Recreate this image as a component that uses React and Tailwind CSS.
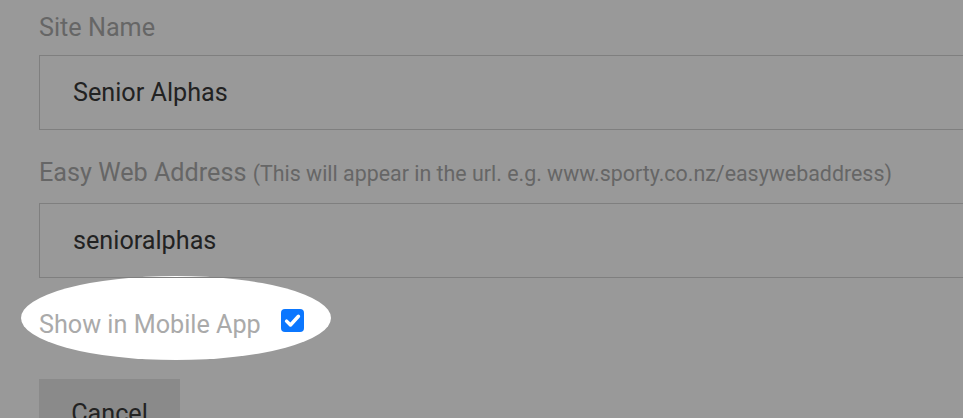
export default function App() {
  return (
    <div
      className="relative w-[963px] h-[418px] overflow-hidden bg-[#999999] pl-[39px]"
      style={{ fontFamily: "Roboto, 'Liberation Sans', sans-serif" }}
    >
      {/* spotlight behind the mobile app toggle */}
      <div className="absolute left-[21px] top-[276px] w-[310px] h-[84px] rounded-[50%] bg-white" />

      <div className="relative flex flex-col">
        <label className="pt-[12px] text-[25.2px] leading-[32px] text-[#666666]">Site Name</label>
        <div className="mt-[11px] h-[75px] w-[960px] border border-[#7f7f7f] flex items-center pl-[33px] text-[25.2px] text-[#222222]">
          Senior Alphas
        </div>

        <label className="mt-[27px] text-[25.2px] leading-[32px] text-[#666666]">
          Easy Web Address{" "}
          <span className="text-[21.4px]">(This will appear in the url. e.g. www.sporty.co.nz/easywebaddress)</span>
        </label>
        <div className="mt-[13px] h-[75px] w-[960px] border border-[#7f7f7f] flex items-center pl-[33px] text-[25.2px] text-[#222222]">
          senioralphas
        </div>

        <div className="mt-[31px] flex items-center gap-[20px] h-[32px]">
          <span className="text-[25.2px] text-[#aaaaaa]">Show in Mobile App</span>
          <span className="mb-[9px] w-[23px] h-[23px] rounded-[4px] bg-[#0b77ff] flex items-center justify-center">
            <svg viewBox="0 0 16 16" className="w-[19px] h-[19px]" fill="none">
              <path d="M3 8.5 L6.3 11.8 L13 4.4" stroke="white" strokeWidth="2.9" strokeLinecap="round" strokeLinejoin="round" />
            </svg>
          </span>
        </div>

        <div className="mt-[38px] w-[141px] h-[60px] bg-[#8a8a8a] flex items-center justify-center pt-[10px] text-[25.2px] text-[#222222]">
          Cancel
        </div>
      </div>
    </div>
  );
}
